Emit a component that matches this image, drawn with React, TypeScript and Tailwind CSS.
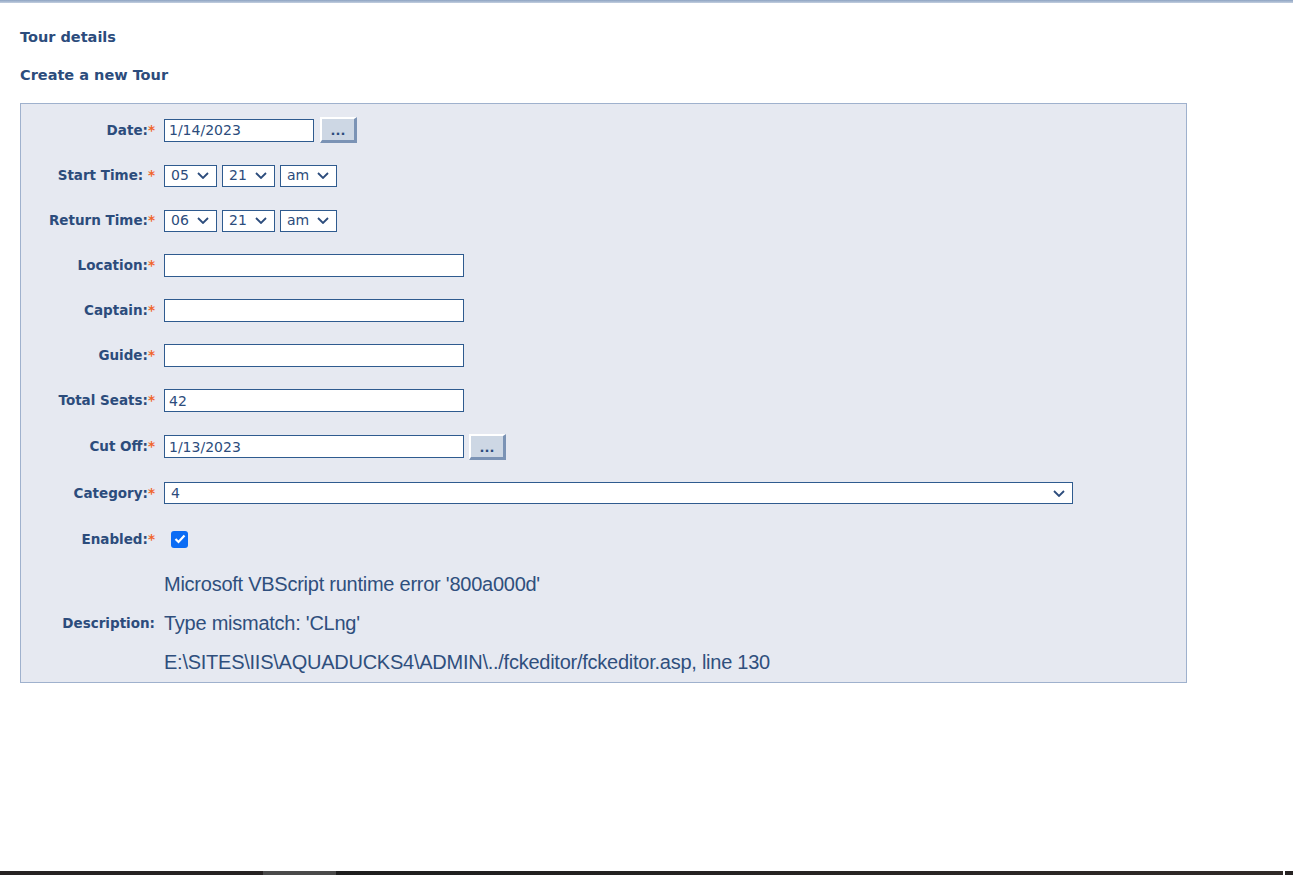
const label = "font-['DejaVu_Sans',sans-serif] font-bold text-[13.5px] text-[#2c4c7c]";
const field = "font-['DejaVu_Sans',sans-serif] text-[14px] text-[#2c4c7c]";

function Star({ space }: { space?: boolean }) {
  return <span className="text-[#f0652c]">{space ? " *" : "*"}</span>;
}

function Row({ name, space, h, children }: { name: string; space?: boolean; h: string; children: React.ReactNode }) {
  return (
    <div className={`flex items-center ${h}`}>
      <div className={`w-[143px] shrink-0 pr-[9px] text-right ${label}`}>
        {name}
        <Star space={space} />
      </div>
      <div className="flex items-center gap-[5px]">{children}</div>
    </div>
  );
}

function TextBox({ value, w }: { value?: string; w: string }) {
  return (
    <input
      readOnly
      value={value ?? ""}
      className={`${w} h-[23px] border border-[#2f5b8f] bg-white pl-[4px] outline-none ${field}`}
    />
  );
}

function Chevron() {
  return (
    <svg width="12" height="7" viewBox="0 0 12 7" fill="none">
      <polyline points="1,1 6,6 11,1" stroke="#2c4c7c" strokeWidth="1.8" />
    </svg>
  );
}

function Select({ value, w }: { value: string; w: string }) {
  return (
    <div
      className={`${w} h-[22px] flex items-center justify-between border border-[#2f5b8f] bg-white pl-[6px] pr-[7px] ${field} text-[14px]`}
    >
      <span>{value}</span>
      <Chevron />
    </div>
  );
}

function DotsButton({ extra }: { extra?: string }) {
  return (
    <button
      className={`${extra ?? ""} w-[37px] h-[26px] bg-[#cdd7e4] border-t-2 border-l-2 border-t-white border-l-white border-b-[3px] border-r-[3px] border-b-[#7b93b5] border-r-[#7b93b5] flex items-end justify-center pb-[3px] font-['DejaVu_Sans',sans-serif] font-bold text-[13px] leading-none text-[#2c4c7c]`}
    >
      ...
    </button>
  );
}

export default function App() {
  return (
    <div className="min-h-[875px] flex flex-col bg-white">
      <div className="h-[3px] bg-gradient-to-b from-[#8ea3c2] to-[#c3cfdf]" />
      <div className="flex-1 px-[20px]">
        <div className="pt-[25px] leading-[18px]">
          <div className={`${label} text-[14.5px]`}>Tour details</div>
          <div className={`${label} text-[14.5px] mt-[20px]`}>Create a new Tour</div>
        </div>
        <div className="mt-[19px] w-[1167px] border border-[#9fb1cd] bg-[#e6e9f1] pt-[3px]">
          <Row name="Date:" h="h-[46px]">
            <TextBox value="1/14/2023" w="w-[150px]" />
            <DotsButton extra="ml-[1px]" />
          </Row>
          <Row name="Start Time:" space h="h-[45px]">
            <Select value="05" w="w-[53px]" />
            <Select value="21" w="w-[53px]" />
            <Select value="am" w="w-[57px]" />
          </Row>
          <Row name="Return Time:" h="h-[45px]">
            <Select value="06" w="w-[53px]" />
            <Select value="21" w="w-[53px]" />
            <Select value="am" w="w-[57px]" />
          </Row>
          <Row name="Location:" h="h-[45px]">
            <TextBox w="w-[300px]" />
          </Row>
          <Row name="Captain:" h="h-[45px]">
            <TextBox w="w-[300px]" />
          </Row>
          <Row name="Guide:" h="h-[45px]">
            <TextBox w="w-[300px]" />
          </Row>
          <Row name="Total Seats:" h="h-[45px]">
            <TextBox value="42" w="w-[300px]" />
          </Row>
          <Row name="Cut Off:" h="h-[47px]">
            <TextBox value="1/13/2023" w="w-[300px]" />
            <DotsButton />
          </Row>
          <Row name="Category:" h="h-[46px]">
            <Select value="4" w="w-[909px]" />
          </Row>
          <Row name="Enabled:" h="h-[46px]">
            <div className="ml-[7px] w-[17px] h-[17px] rounded-[3px] bg-[#0b6cf4] flex items-center justify-center">
              <svg width="12" height="10" viewBox="0 0 12 10" fill="none">
                <polyline points="1.5,5 4.5,8 10.5,1.5" stroke="white" strokeWidth="2.2" />
              </svg>
            </div>
          </Row>
          <div className="flex items-center pt-[3px]">
            <div className={`w-[143px] shrink-0 pr-[9px] text-right ${label}`}>Description:</div>
            <div className="font-['Liberation_Sans',Arial,sans-serif] text-[20px] tracking-[-0.25px] leading-[39px] text-[#2f4f7d]">
              <div>Microsoft VBScript runtime error '800a000d'</div>
              <div>Type mismatch: 'CLng'</div>
              <div>E:\SITES\IIS\AQUADUCKS4\ADMIN\../fckeditor/fckeditor.asp, line 130</div>
            </div>
          </div>
        </div>
      </div>
      <div className="h-[4px] flex bg-[#262222]">
        <div className="w-[263px]" />
        <div className="w-[73px] bg-[#4a4a4a]" />
        <div className="flex-1 bg-gradient-to-r from-[#1e1e1e] to-[#302a28]" />
        <div className="w-[2px] bg-white mr-[8px]" />
      </div>
    </div>
  );
}
